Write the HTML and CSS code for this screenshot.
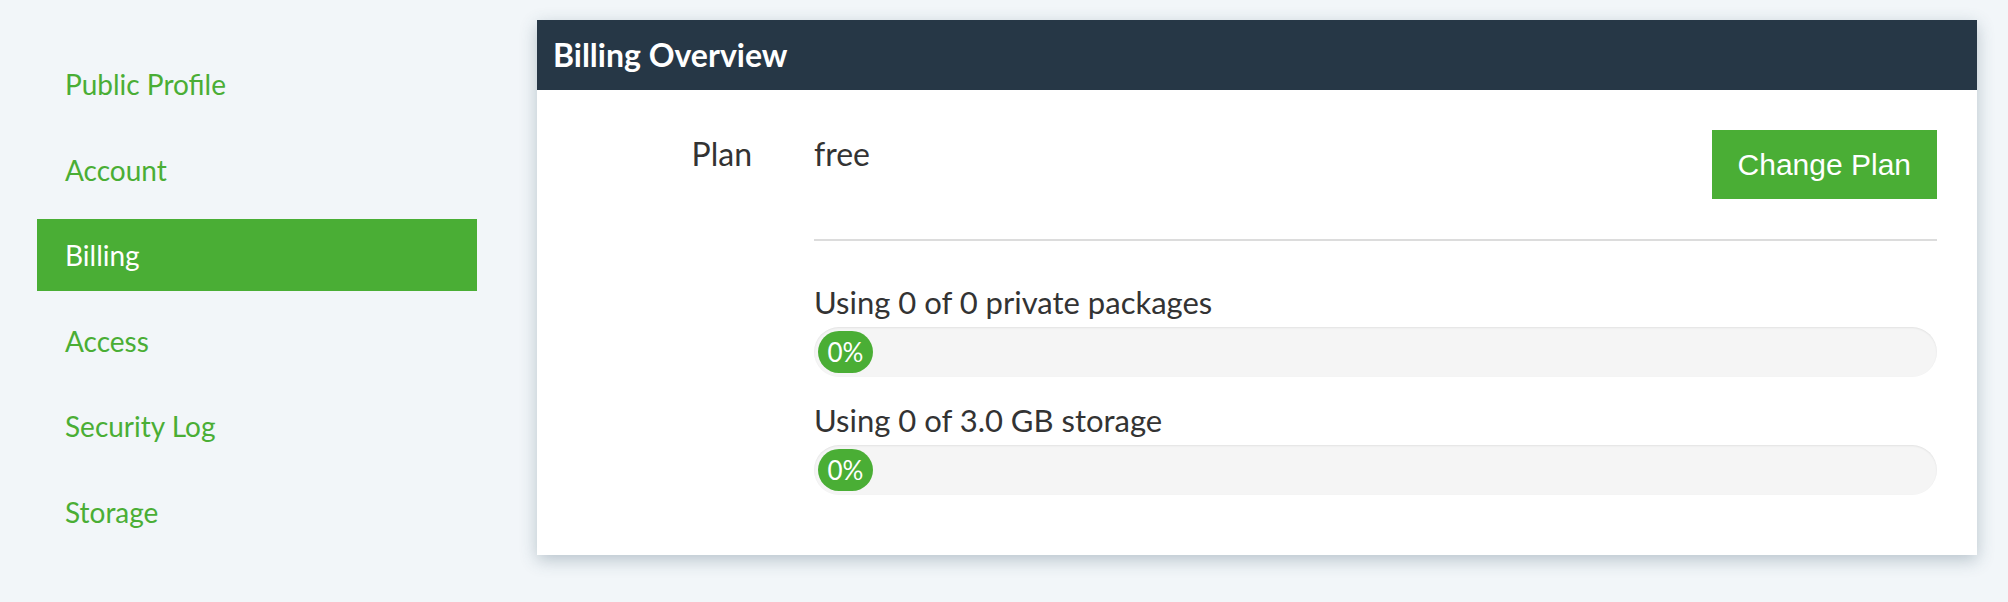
FILE: index.html
```html
<!DOCTYPE html>
<html lang="en">
<head>
<meta charset="utf-8">
<title>Billing Overview</title>
<link rel="stylesheet" href="styles.css">
</head>
<body>
<div class="page">
  <nav class="sidebar">
    <a class="nav-item" href="#">Public Profile</a>
    <a class="nav-item" href="#">Account</a>
    <a class="nav-item active" href="#">Billing</a>
    <a class="nav-item" href="#">Access</a>
    <a class="nav-item" href="#">Security Log</a>
    <a class="nav-item" href="#">Storage</a>
  </nav>
  <section class="card">
    <header class="card-header">Billing Overview</header>
    <div class="card-body">
      <div class="label">Plan</div>
      <div class="value">
        <div class="plan-row">
          <span class="plan-name">free</span>
          <button class="btn">Change Plan</button>
        </div>
        <hr class="divider">
        <div class="usage usage-first">
          <div class="usage-text">Using 0 of 0 private packages</div>
          <div class="bar"><div class="bar-fill">0%</div></div>
        </div>
        <div class="usage">
          <div class="usage-text">Using 0 of 3.0 GB storage</div>
          <div class="bar"><div class="bar-fill">0%</div></div>
        </div>
      </div>
    </div>
  </section>
</div>
</body>
</html>
```
FILE: styles.css
```css
* { box-sizing: border-box; }
html, body {
  margin: 0;
  padding: 0;
  background: #f2f6f9;
  font-family: Lato, "Open Sans", sans-serif;
  color: #333;
}
.page {
  display: flex;
  align-items: flex-start;
  height: 602px;
}
.sidebar {
  margin-left: 37px;
  width: 440px;
  padding-top: 48px;
  display: flex;
  flex-direction: column;
  gap: 13.6px;
}
.nav-item {
  display: block;
  height: 72px;
  line-height: 72px;
  padding-left: 28px;
  font-size: 28px;
  color: #4aae35;
  text-decoration: none;
}
.nav-item.active {
  background: #4aae35;
  color: #fff;
}
.card {
  margin-left: 60px;
  margin-top: 20px;
  width: 1440px;
  background: #fff;
  box-shadow: 0 5px 16px rgba(50, 80, 100, 0.3);
}
.card-header {
  height: 70px;
  line-height: 70px;
  background: #263746;
  color: #fff;
  font-weight: bold;
  font-size: 32px;
  padding-left: 16px;
}
.card-body {
  display: grid;
  grid-template-columns: 277px 1fr;
  padding: 40px 40px 60px 0;
}
.label {
  text-align: right;
  padding-right: 62px;
  font-size: 32px;
  line-height: 47px;
}
.plan-row {
  display: flex;
  justify-content: space-between;
  align-items: flex-start;
}
.plan-name {
  font-size: 32px;
  line-height: 47px;
}
.btn {
  height: 69px;
  padding: 0 26px;
  border: none;
  background: #4aae35;
  color: #fff;
  font-family: "Liberation Sans", Arial, sans-serif;
  font-size: 30px;
}
.divider {
  margin: 40px 0 0;
  border: none;
  border-top: 2px solid #dcdcdc;
}
.usage-text {
  font-size: 31px;
  line-height: 40px;
}
.usage-first { margin-top: 41px; }
.usage + .usage { margin-top: 23px; }
.bar {
  margin-top: 5px;
  height: 50px;
  border-radius: 25px;
  background: #f5f5f5;
  padding: 4px;
  box-shadow: inset 0 1px 2px rgba(0, 0, 0, 0.08);
}
.bar-fill {
  width: 55px;
  height: 42px;
  border-radius: 21px;
  background: #4aae35;
  color: #fff;
  font-size: 26px;
  line-height: 42px;
  text-align: center;
}
```
